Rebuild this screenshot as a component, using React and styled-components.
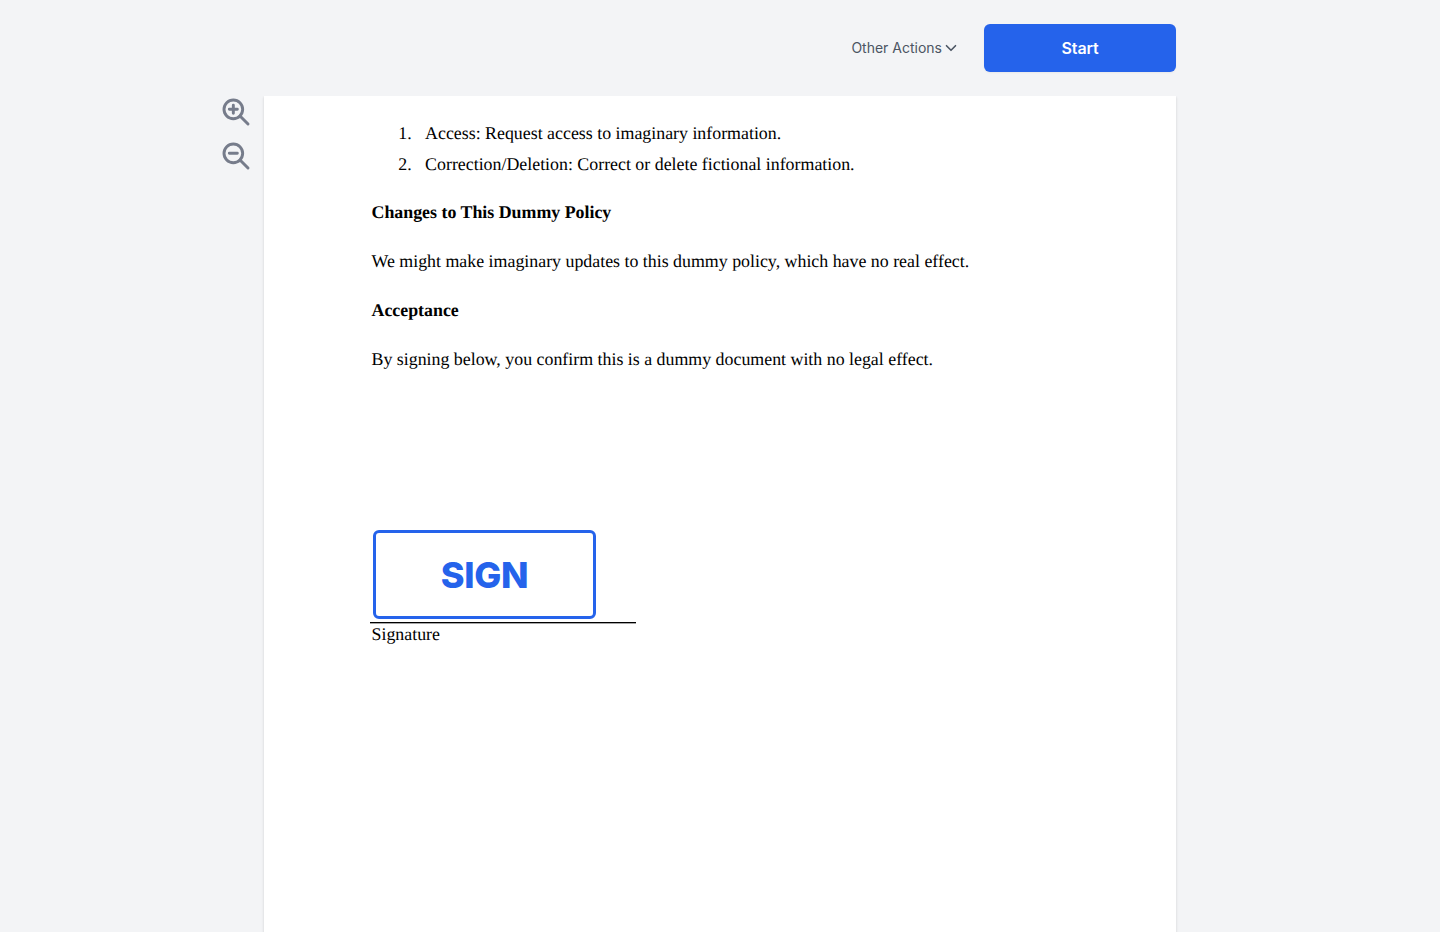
import styled, { createGlobalStyle } from "styled-components"

const GlobalStyle = createGlobalStyle`
* {
  box-sizing: border-box;
}
body {
  margin: 0;
  background: #f3f4f6;
}
`

const Container = styled.div`
height: 932px;
overflow: hidden;
background: #f3f4f6;
font-family: Inter, "Liberation Sans", sans-serif;
`

const Header = styled.header`
width: 912px;
height: 96px;
margin: 0 auto;
display: flex;
align-items: center;
justify-content: flex-end;
gap: 24px;
`

const Actions = styled.button`
display: flex;
align-items: center;
padding: 0;
border: none;
background: none;
color: #4b5563;
font-family: inherit;
font-size: 14px;
line-height: 20px;
cursor: pointer;
`

const Start = styled.button`
width: 192px;
height: 48px;
border: none;
border-radius: 6px;
background: #2563eb;
color: white;
font-family: inherit;
font-size: 16px;
font-weight: 600;
letter-spacing: -0.15px;
box-shadow: 0 1px 2px rgba(0, 0, 0, 0.05);
cursor: pointer;
`

const Main = styled.main`
display: flex;
height: 836px;
padding-left: 220px;
gap: 12px;
overflow: hidden;
`

const ZoomTools = styled.div`
width: 32px;
display: flex;
flex-direction: column;
gap: 12px;
`

const ZoomButton = styled.button`
height: 32px;
padding: 0;
border: none;
background: none;
color: #767c8b;
cursor: pointer;
`

const Icon = styled.svg`
display: block;
width: ${(props) => props.$size}px;
height: ${(props) => props.$size}px;
fill: none;
stroke: currentColor;
stroke-width: 2.2;
stroke-linecap: round;
stroke-linejoin: round;
`

const Page = styled.article`
width: 912px;
height: 900px;
padding: 21.7px 107px 0 107.5px;
background: white;
color: black;
box-shadow: 0 1px 3px rgba(0, 0, 0, 0.1), 0 1px 2px rgba(0, 0, 0, 0.06);
font-family: "Liberation Serif", serif;
font-size: 17.88px;
line-height: 31px;
text-rendering: geometricPrecision;
`

const List = styled.ol`
margin: 0 0 17.8px;
padding: 0;
list-style: none;
`

const Item = styled.li`
display: flex;
padding-left: 26.8px;
`

const Number = styled.span`
width: 26.8px;
`

const Title = styled.h2`
margin: 0 0 17.8px;
font-size: inherit;
font-weight: 700;
`

const Text = styled.p`
margin: 0 0 17.8px;
`

const Signature = styled.section`
width: 266px;
margin: 155.1px 0 0 -1.5px;
`

const SignLine = styled.div`
height: 93px;
padding-left: 3px;
border-bottom: 1px solid black;
box-shadow: 0 1px 0 rgba(0, 0, 0, 0.35);
`

const Sign = styled.button`
display: block;
width: 223px;
height: 89px;
padding: 2px 0 0;
border: 3px solid #2563eb;
border-radius: 6px;
background: white;
color: #2563eb;
font-family: Inter, "Liberation Sans", sans-serif;
font-size: 36px;
font-weight: 800;
letter-spacing: -0.3px;
cursor: pointer;
`

const Label = styled.div`
padding-left: 1.5px;
line-height: 23px;
`

const App = () => {
  return (
    <Container>
      <GlobalStyle/>
      <Header>
        <Actions>
          Other Actions
          <Icon $size={18} viewBox="0 0 24 24">
            <path d="M6 9l6 6l6 -6"/>
          </Icon>
        </Actions>
        <Start>Start</Start>
      </Header>
      <Main>
        <ZoomTools>
          <ZoomButton aria-label="Zoom in">
            <Icon $size={32} viewBox="0 0 24 24">
              <circle cx="10" cy="10" r="7"/>
              <path d="M7 10h6M10 7v6M21 21l-6 -6"/>
            </Icon>
          </ZoomButton>
          <ZoomButton aria-label="Zoom out">
            <Icon $size={32} viewBox="0 0 24 24">
              <circle cx="10" cy="10" r="7"/>
              <path d="M7 10h6M21 21l-6 -6"/>
            </Icon>
          </ZoomButton>
        </ZoomTools>
        <Page>
          <List>
            <Item><Number>1.</Number>Access: Request access to imaginary information.</Item>
            <Item><Number>2.</Number>Correction/Deletion: Correct or delete fictional information.</Item>
          </List>
          <Title>Changes to This Dummy Policy</Title>
          <Text>We might make imaginary updates to this dummy policy, which have no real effect.</Text>
          <Title>Acceptance</Title>
          <Text>By signing below, you confirm this is a dummy document with no legal effect.</Text>
          <Signature>
            <SignLine>
              <Sign>SIGN</Sign>
            </SignLine>
            <Label>Signature</Label>
          </Signature>
        </Page>
      </Main>
    </Container>
  )
}

export default App
